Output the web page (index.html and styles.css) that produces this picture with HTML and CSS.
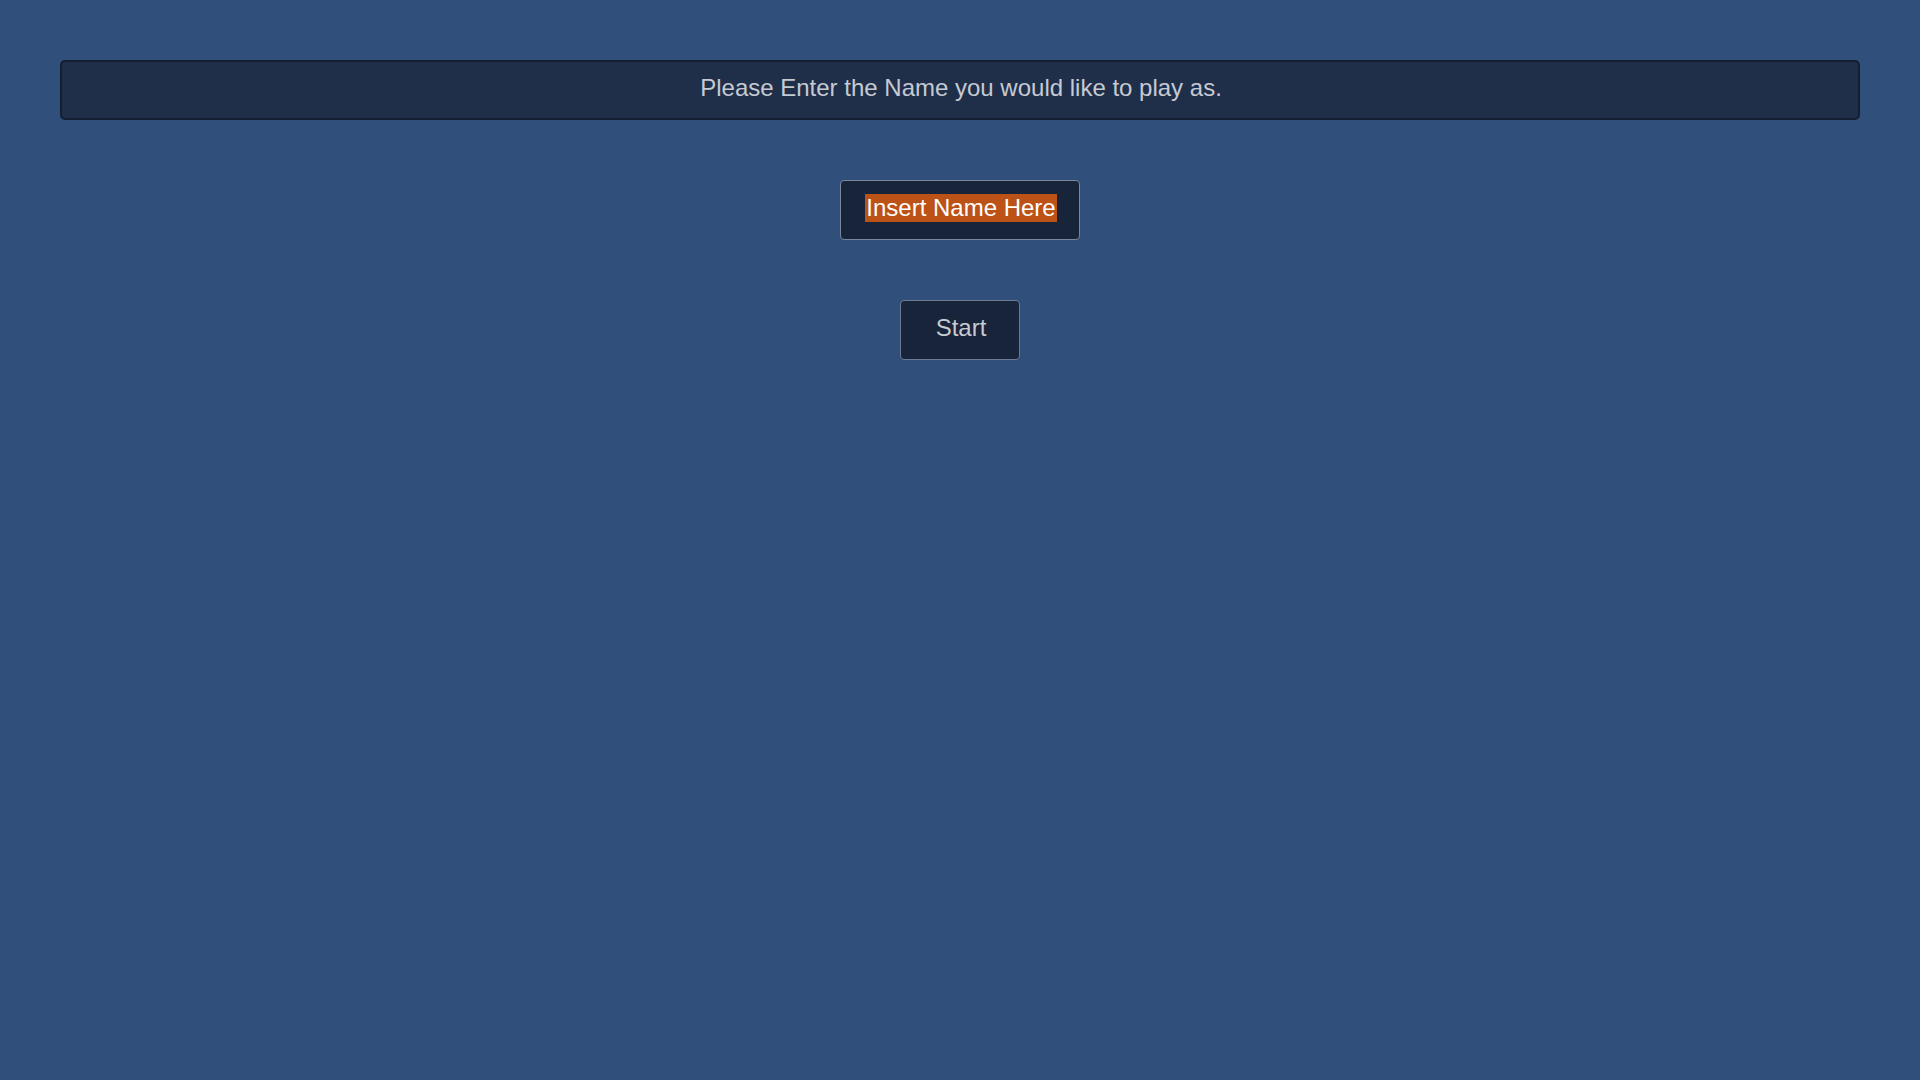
FILE: index.html
```html
<!DOCTYPE html>
<html>
<head>
<meta charset="utf-8">
<link rel="stylesheet" href="styles.css">
</head>
<body>
<main class="screen">
  <div class="banner">Please Enter the Name you would like to play as.</div>
  <div class="name-field"><span class="selected">Insert Name Here</span></div>
  <button class="start-btn">Start</button>
</main>
</body>
</html>
```
FILE: styles.css
```css
html, body {
  margin: 0;
  padding: 0;
  width: 1920px;
  height: 1080px;
  background: #30507b;
  overflow: hidden;
}
.screen {
  display: flex;
  flex-direction: column;
  align-items: center;
  padding: 60px 60px 0 60px;
  font-family: "Liberation Sans", Arial, sans-serif;
  font-size: 24px;
}
.banner {
  box-sizing: border-box;
  width: 1800px;
  height: 60px;
  padding: 0 0 5px 2px;
  background: #1f2f4a;
  border: 2px solid #141f33;
  border-radius: 5px;
  color: #c6cad2;
  display: flex;
  align-items: center;
  justify-content: center;
}
.name-field {
  box-sizing: border-box;
  margin-top: 60px;
  width: 240px;
  height: 60px;
  padding: 0 0 5px 2px;
  background: #18243a;
  border: 1px solid #7a889f;
  border-radius: 4px;
  display: flex;
  align-items: center;
  justify-content: center;
}
.selected {
  background: #bc5216;
  color: #ffffff;
  line-height: 28px;
  padding: 0 1px;
}
.start-btn {
  box-sizing: border-box;
  margin-top: 60px;
  width: 120px;
  height: 60px;
  background: #18243a;
  border: 1px solid #6c7b94;
  border-radius: 4px;
  color: #c6cad2;
  font-family: "Liberation Sans", Arial, sans-serif;
  font-size: 24px;
  padding: 0 0 4px 2px;
}
```
